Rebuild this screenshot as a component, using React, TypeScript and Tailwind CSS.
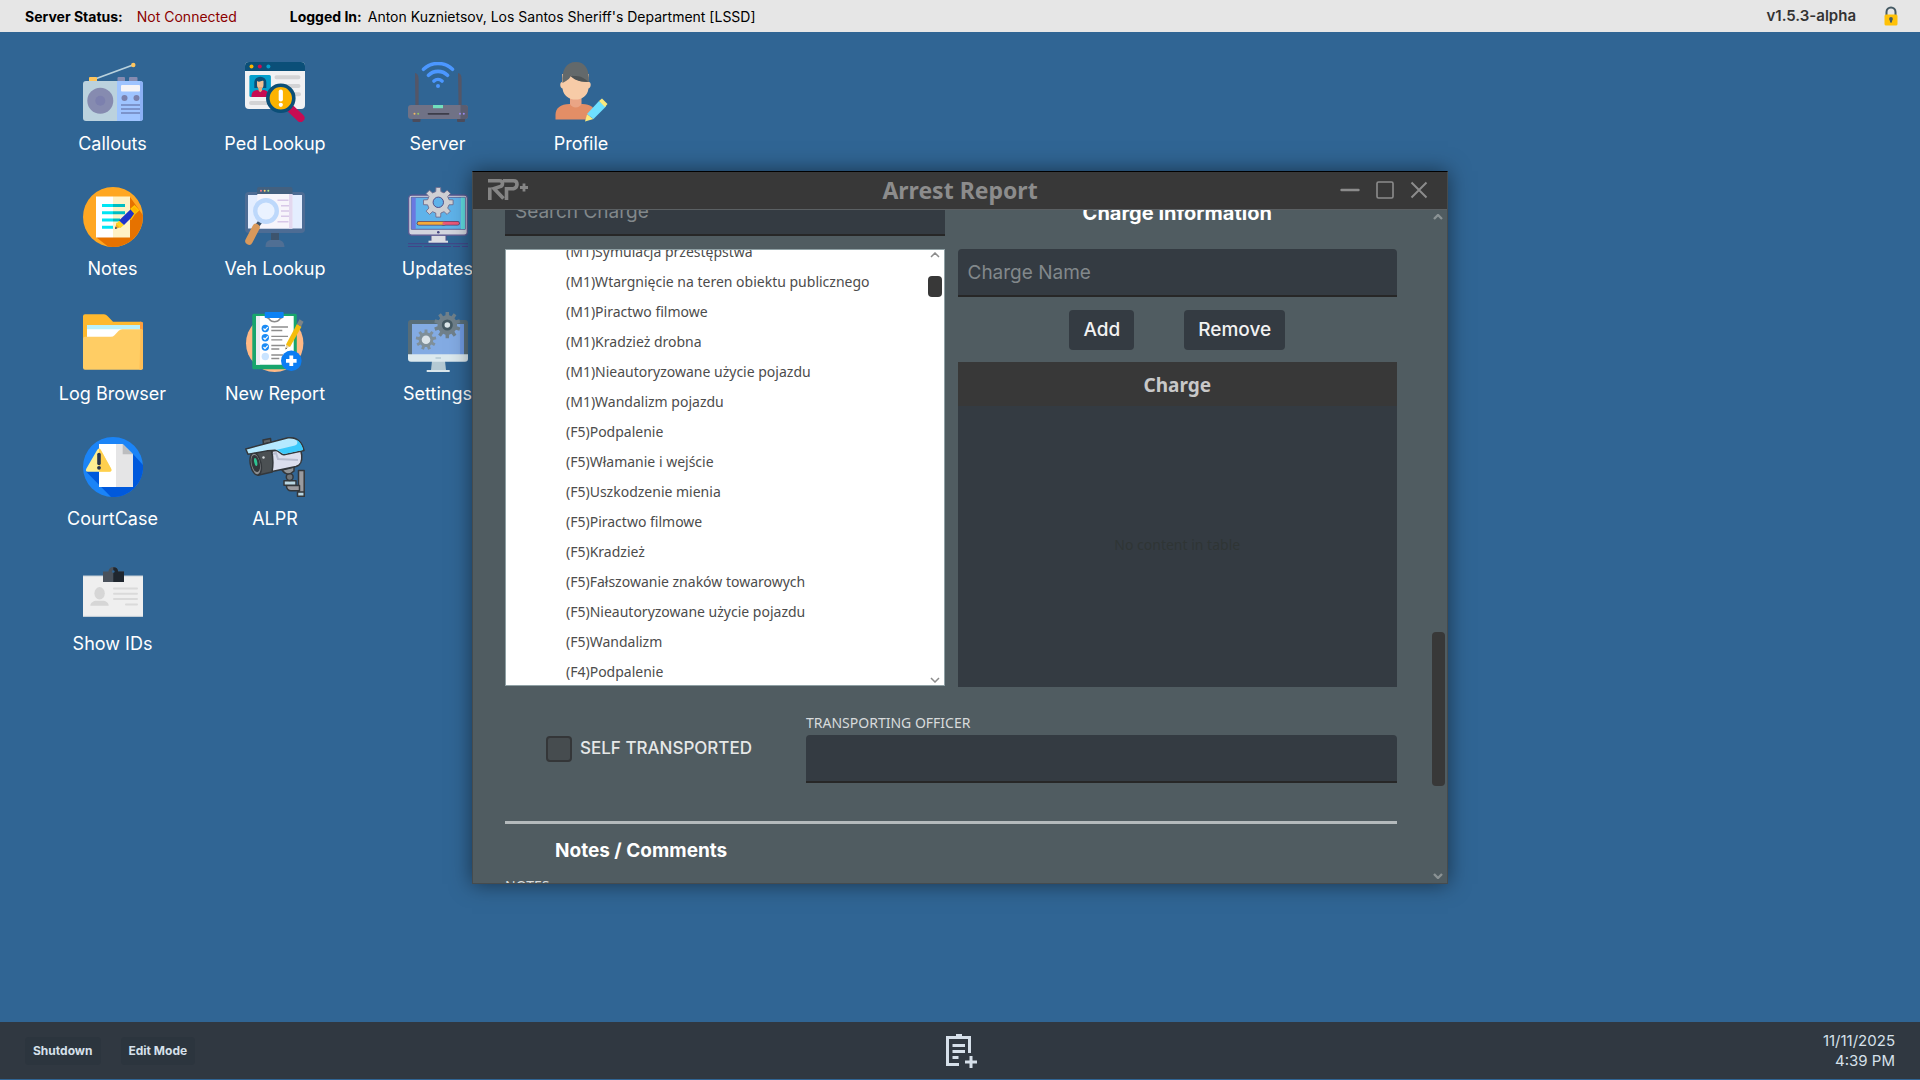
import React from "react";

function gearPath(cx: number, cy: number, outer: number, root: number, teeth: number) {
  const pts: string[] = [];
  const step = (Math.PI * 2) / teeth;
  for (let i = 0; i < teeth; i++) {
    const a = i * step - Math.PI / 2;
    const corners: [number, number][] = [
      [a - step * 0.3, root],
      [a - step * 0.2, outer],
      [a + step * 0.2, outer],
      [a + step * 0.3, root],
    ];
    for (const [angle, r] of corners) {
      pts.push(`${(cx + Math.cos(angle) * r).toFixed(2)} ${(cy + Math.sin(angle) * r).toFixed(2)}`);
    }
  }
  return `M${pts.join("L")}Z`;
}

function IconFrame({ children }: { children: React.ReactNode }) {
  return (
    <svg viewBox="0 0 60 60" className="size-[60px]" aria-hidden="true">
      {children}
    </svg>
  );
}

function RadioIcon() {
  return (
    <IconFrame>
      <path d="M12 17 50 3" stroke="#b9d2dd" strokeWidth="1.8" />
      <circle cx="50.3" cy="3" r="2.2" fill="#ffc55c" />
      <rect x="6" y="15" width="8" height="5" rx="1" fill="#ffc55c" />
      <rect x="34.5" y="15" width="7.5" height="5" rx="1" fill="#868bb0" />
      <rect x="46" y="15" width="8.5" height="5" rx="1" fill="#868bb0" />
      <path d="M3 19h31v40H3a3 3 0 0 1-3-3V22a3 3 0 0 1 3-3Z" fill="#bbd2de" />
      <path d="M34 19h23a3 3 0 0 1 3 3v34a3 3 0 0 1-3 3H34Z" fill="#9fc4ff" />
      <path d="M57 19a3 3 0 0 1 3 3v34a3 3 0 0 1-3 3Z" fill="#8bb0f5" />
      <circle cx="17.3" cy="38.8" r="13" fill="#868bb0" />
      <circle cx="17.3" cy="38.8" r="5" fill="#7c80ae" />
      <rect x="38" y="23" width="19" height="6.4" rx="1" fill="#f6f4f6" />
      <circle cx="41.5" cy="36" r="3" fill="#7a80ac" />
      <circle cx="53.5" cy="36" r="3" fill="#7a80ac" />
      <path d="M38 43h19M38 47h19M38 51h19" stroke="#7c94cb" strokeWidth="1.8" />
    </IconFrame>
  );
}

function PedIcon() {
  return (
    <IconFrame>
      <rect width="60" height="47" rx="4" fill="#f1f1f3" />
      <path d="M4 0h52a4 4 0 0 1 4 4v5H0V4a4 4 0 0 1 4-4Z" fill="#0b4f78" />
      <circle cx="6.5" cy="4.6" r="2" fill="#fcb300" />
      <circle cx="14.8" cy="4.6" r="2" fill="#c80b52" />
      <circle cx="23.4" cy="4.6" r="2" fill="#049fcc" />
      <rect x="4.4" y="13" width="21.5" height="22" rx="1.5" fill="#049fcc" />
      <path d="M9.300 26V20a5.800 5 0 0 1 12 0v6Z" fill="#0b4f78" />
      <path d="M12 19c3 2 4-1 6.500 0v4a3.200 3.600 0 0 1-6.500 0Z" fill="#f2bf92" />
      <rect x="13.500" y="25" width="3.500" height="5" fill="#e5ad7d" />
      <path d="M6.500 35c0-5 2-7 6.500-7l2.300 2.500L17.600 28c4.400 0 6.500 2 6.500 7Z" fill="#c80b52" />
      <path d="M31.500 15.300h22M31.500 23.900h22M46 32.300h8M6 40.900h18" stroke="#d3d3d5" strokeWidth="4" strokeLinecap="round" />
      <path d="m46 47 9.500 9" stroke="#c80b52" strokeWidth="8" strokeLinecap="round" />
      <circle cx="35.800" cy="36.300" r="13" fill="#fcb300" stroke="#0b4f78" strokeWidth="3.600" />
      <path d="M35.800 29.500v8" stroke="#fff" strokeWidth="4.200" strokeLinecap="round" />
      <circle cx="35.800" cy="42.800" r="2.100" fill="#fff" />
    </IconFrame>
  );
}

function RouterIcon() {
  return (
    <IconFrame>
      <path d="M7 11c2 0 3.600 2 3.600 6v27H7.400ZM50 11c2 0 3.600 2 3.600 6v27h-3Z" fill="#545667" />
      <rect x="4.500" y="56" width="8" height="4" rx="1" fill="#4b4c5c" />
      <rect x="49" y="56" width="8" height="4" rx="1" fill="#4b4c5c" />
      <rect x="0" y="43" width="60" height="14" rx="3" fill="#707286" />
      <path d="M52.500 43H57a3 3 0 0 1 3 3v8a3 3 0 0 1-3 3h-4.500Z" fill="#5b5d70" />
      <rect x="25" y="43" width="10" height="3.200" fill="#71e0bd" />
      <path d="M20.500 51.800h20" stroke="#3c3d49" strokeWidth="1.800" strokeLinecap="round" />
      <circle cx="6.500" cy="51.800" r="1" fill="#f5b862" />
      <circle cx="10.200" cy="51.800" r="1" fill="#92c663" />
      <circle cx="52" cy="51.800" r="1" fill="#9a8bee" />
      <circle cx="55.800" cy="51.800" r="1" fill="#9a8bee" />
      <path d="M15.500 7.300a21 21 0 0 1 29 0M20.500 13.300a13.500 13.500 0 0 1 19 0M26 19a6 6 0 0 1 8 0" fill="none" stroke="#4b97ff" strokeWidth="3.600" strokeLinecap="round" />
      <circle cx="30" cy="24" r="2" fill="#4b97ff" />
    </IconFrame>
  );
}

function ProfileIcon() {
  return (
    <IconFrame>
      <path d="M4.500 57.500V53c0-7 5-11 14-11h13c8 0 12 4 12.500 8l-8 7.500Z" fill="#e38e66" />
      <path d="M19 34h11.500v8c-2 4.500-9.500 4.500-11.500 0Z" fill="#eaa585" />
      <path d="M11 12h27v8c2.500 0 2.300 6-.5 6.500C36.500 34 31 37.600 24.600 37.600S12.500 34 11.500 26.500C8.700 26 8.500 20 11 20Z" fill="#f7cba7" />
      <path d="M11.500 21c-1-13 3.500-21 13.500-21 9 0 13.500 7 13 20-8 0-14-2-18-6.500C19 17 15 19 11.500 21Z" fill="#63696b" />
      <path d="M19 13.500c4 1 12-1 18 6.300C29 20 23 18 19 13.500Z" fill="#4d5355" />
      <path d="m34 59.500 2-7 6.500 4.500Z" fill="#fbe97d" />
      <path d="m36 52 12-13 7 5.500L42.500 57Z" fill="#6ee0ff" />
      <path d="m48 39 3-2.500 5.500 5.500-2.500 3Z" fill="#fbe97d" />
    </IconFrame>
  );
}

function NotesIcon() {
  return (
    <IconFrame>
      <circle cx="30" cy="30" r="30" fill="#ffa722" />
      <path d="m47 10 12.800 18A30 30 0 0 1 25 59.500L13.500 50.500Z" fill="#e67200" />
      <path d="M13 9.500h17v41H13Z" fill="#fff" />
      <path d="M30 9.500h17v41H30Z" fill="#fff2c6" />
      <path d="M19 18.500h11M19 25.700h11M19 33h11M19 40.300h11" stroke="#00e5f4" strokeWidth="3" />
      <path d="M30 18.500h12M30 25.700h12M30 33h7" stroke="#00bdc2" strokeWidth="3" />
      <path d="m32 42 1.600-6.500 4.500 4.500Z" fill="#f5ad1f" />
      <path d="m33 37 3.500-3.600 4.500 4.500-3.700 3.100Z" fill="#ffd21f" />
      <path d="m36 33.500 13-12.500 4.600 4.500L41 38Z" fill="#1f33c9" />
      <path d="m48 22 3.500-3 4 4.200-3.500 3.300ZM52.500 25.500 47.500 33" fill="#ffb300" stroke="#ffc400" strokeWidth="1.300" />
      <path d="m32 42 .6-2.400 1.700 1.700Z" fill="#26306b" />
    </IconFrame>
  );
}

function VehIcon() {
  return (
    <IconFrame>
      <path d="M26 44h8v9h-8Z" fill="#3d546e" />
      <path d="M20.500 60c0-5 2-7 6-7h6.500c4 0 6 2 6.500 7Z" fill="#506f94" />
      <rect x="0" y="5" width="60" height="41" rx="4" fill="#4d6c94" />
      <path d="M3 8h54v33.500H3Z" fill="#e4eeff" />
      <path d="M12.300 7h35v34.500h-35Z" fill="#f7f5fb" />
      <path d="M44 7h3.500v34.500H44Z" fill="#e3d8ef" />
      <path d="M14 0h31.500a2 2 0 0 1 2 2v5H12V2a2 2 0 0 1 2-2Z" fill="#43607f" />
      <circle cx="16" cy="3.700" r="1" fill="#f0798b" />
      <circle cx="19.700" cy="3.700" r="1" fill="#ffcc6b" />
      <circle cx="23.300" cy="3.700" r="1" fill="#a6e08b" />
      <path d="M32.500 13.300h11M36 18.700h8M36 24h8M36 29.300h8M32.500 34.700h11" stroke="#d8c8e8" strokeWidth="1.600" />
      <path d="m12 39 3-4" stroke="#3d546e" strokeWidth="4.500" />
      <path d="m11 40.500-7 13.500" stroke="#d9995b" strokeWidth="7.500" strokeLinecap="round" />
      <circle cx="21" cy="24" r="10.800" fill="#eaf2ff" stroke="#bdd8fb" strokeWidth="4.400" />
    </IconFrame>
  );
}

function UpdatesIcon() {
  return (
    <IconFrame>
      <path d="M23 48h15v7H23Z" fill="#dcdde3" stroke="#51508a" strokeWidth="1" />
      <path d="M20.500 54.700h19.500" stroke="#dcdde3" strokeWidth="2" />
      <rect x=".7" y="8.200" width="58.600" height="40" rx="3" fill="#d3d5de" stroke="#5c5790" strokeWidth="1.200" />
      <path d="M3.300 10.300h54v32h-54Z" fill="#5fb3ea" stroke="#51508a" strokeWidth=".8" />
      <path d="M3.700 10.700h4V42h-4Z" fill="#6b78e0" />
      <path d="M53 10.700h4V42h-4Z" fill="#5fd9dd" />
      <circle cx="30.300" cy="45.300" r="1.300" fill="#454380" />
      <path d={gearPath(30.3, 15.3, 15, 11, 8)} fill="#cfd0d4" stroke="#6f6d8e" strokeWidth=".9" strokeLinejoin="round" />
      <circle cx="30.300" cy="15.300" r="5.200" fill="#5fb3ea" stroke="#51508a" strokeWidth="1" />
      <path d="M11 36.300h25" stroke="#52436d" strokeWidth="4.600" strokeLinecap="round" />
      <path d="M35 36.300h14.500" stroke="#52436d" strokeWidth="4.600" strokeLinecap="round" />
      <path d="M11 36.300h25" stroke="#f4ab38" strokeWidth="3" strokeLinecap="round" />
      <path d="M36 36.300h13.500" stroke="#ec5878" strokeWidth="3" strokeLinecap="round" />
      <path d="M0 56.700h60M0 59.500h14M16 59.500h27M45 59.500h7M54 59.500h6" stroke="#444388" strokeWidth="1" />
    </IconFrame>
  );
}

function FolderIcon() {
  return (
    <IconFrame>
      <path d="M2 2.300h19q2 0 3.500 1.600L30 9.700h28a2 2 0 0 1 2 2V40H0V4.300a2 2 0 0 1 2-2Z" fill="#ffb92e" />
      <path d="M57 9.700h1a2 2 0 0 1 2 2V20h-3Z" fill="#ff9e3d" />
      <path d="M4 13h53v20H4Z" fill="#fff" />
      <path d="M4 13h53v4.300H4Z" fill="#bbf1fb" />
      <path d="M2 24.700h26q2 0 3.500-1.500l4.200-4.400q1.500-1.500 3.500-1.500H58a2 2 0 0 1 2 2V55.700a2 2 0 0 1-2 2H2a2 2 0 0 1-2-2v-29a2 2 0 0 1 2-2Z" fill="#ffcd64" />
      <path d="M57.500 17.300h.5a2 2 0 0 1 2 2V55.700a2 2 0 0 1-2 2h-1.500Z" fill="#ffbe55" />
    </IconFrame>
  );
}

function ReportIcon() {
  return (
    <IconFrame>
      <circle cx="29.700" cy="31.200" r="28.700" fill="#ffb985" />
      <rect x="7.300" y="1.700" width="44.500" height="55.500" rx="1.500" fill="#18a56d" />
      <path d="M11 4h37.700v48.700H11Z" fill="#fff" />
      <path d="M11 4h4v48.700h-4Z" fill="#ebedf2" />
      <path d="M21.500 5.500c1.500 0 3 1.500 4 3s7 1.500 8 0 2.500-3 4-3" fill="none" stroke="#8b8b8b" strokeWidth="1.500" />
      <rect x="19.700" y="0" width="19" height="6" rx="1" fill="#0b82f5" />
      {[16.5, 25.8, 35].map((y) => (
        <g key={y}>
          <circle cx="20.300" cy={y} r="3.700" fill="#1b8cf5" />
          <path d={`m18.500 ${y} 1.500 1.600 2.800-3`} fill="none" stroke="#fff" strokeWidth="1.300" />
        </g>
      ))}
      <circle cx="20.300" cy="44.500" r="3.700" fill="#c9e4ff" />
      <path d="M26.300 15H43M26.300 18.500h11M26.300 24.300H43M26.300 27.800h11M26.300 33.500H40M26.300 37h8M26.300 43H38M26.300 46.500h8" stroke="#8d8d8d" strokeWidth="1.300" />
      <path d="m40.500 37.500.7-5.500 3.700 2.200Z" fill="#e9d4a4" />
      <path d="m41 32.500 11-20.500 4.500 2.700L45 35Z" fill="#f5bd0d" />
      <path d="m52 12 2.500-4.700 4 2.500-2.400 4.700Z" fill="#7d8487" />
      <path d="m40.500 37.500.2-1.900 1.300.8Z" fill="#333" />
      <circle cx="46.300" cy="48.800" r="10.300" fill="#0b7df3" />
      <path d="M46.300 43.500v10.600M41 48.800h10.600" stroke="#fff" strokeWidth="3.800" />
    </IconFrame>
  );
}

function SettingsIcon() {
  return (
    <IconFrame>
      <path d="M24 49h13l1 9H23Z" fill="#b4c9d3" />
      <path d="M18.700 58h23v2h-23Z" fill="#dae6eb" />
      <rect x="0" y="8" width="60" height="41" rx="3" fill="#576d79" />
      <path d="M4 12h52v31H4Z" fill="#83abe3" />
      <path d="M52 12h4v31h-4Z" fill="#6f9ae0" />
      <path d="M0 42.300h60v4.500a3 3 0 0 1-3 3H3a3 3 0 0 1-3-3Z" fill="#dce9ee" />
      <path d="M27.500 46h5.500" stroke="#b4c9d3" strokeWidth="1.500" />
      <path d={gearPath(39.3, 13, 13.3, 9.8, 10)} fill="#70808a" />
      <circle cx="39.300" cy="13" r="5.500" fill="#455a64" />
      <circle cx="39.300" cy="13" r="2.800" fill="#dbe6ea" />
      <path d={gearPath(18, 27.7, 10.3, 7.3, 9)} fill="#7f8f99" />
      <circle cx="18" cy="27.700" r="4.300" fill="#dbe3e8" />
    </IconFrame>
  );
}

function CourtIcon() {
  return (
    <IconFrame>
      <circle cx="30" cy="30" r="30" fill="#1b84f7" />
      <path d="m50 17 10 11A30 30 0 0 1 28 60L3.500 35 15 30Z" fill="#0059dc" />
      <path d="M16 7h17v43H16Z" fill="#fff" />
      <path d="M33 7h6.700L50 17.300V50H33Z" fill="#e5e5e6" />
      <path d="M39.700 7 50 17.300H39.700Z" fill="#bcbdbf" />
      <path d="M16 11.500q1.200 0 2 1.700l10.200 18.500q1 3-1.700 3H5q-3 0-1.700-3L14 13.200q.8-1.700 2-1.700Z" fill="#ffee92" />
      <path d="M16 11.500q1.200 0 2 1.700l10.200 18.500q1 3-1.700 3H16Z" fill="#ffcf4d" />
      <path d="M16 17.500v9" stroke="#28344d" strokeWidth="3.600" strokeLinecap="round" />
      <circle cx="16" cy="30.800" r="1.900" fill="#28344d" />
    </IconFrame>
  );
}

function CameraIcon() {
  return (
    <IconFrame>
      <g stroke="#33373b" strokeWidth="1.500" strokeLinejoin="round">
        <path d="m18.500 7-.5-4 7.500-1.500.5 4Z" fill="#5d6265" />
        <path d="M53.500 33.500h5.700v25.700h-5.700Z" fill="#9b9b9f" />
        <path d="M52.500 55h6.700v4.300h-6.700Z" fill="#b9d6e2" />
        <path d="M41.500 48.500h13v5.300H46a4.500 4.500 0 0 1-4.500-4.500Z" fill="#9b9b9f" />
        <path d="M39 43.700h12v4.500H39Z" fill="#b9d6e2" />
        <circle cx="44.700" cy="40" r="3.400" fill="#6f7478" />
        <path d="m37 33 12-3v4q-3 3-6 3t-6-4Z" fill="#8f9397" />
        <path d="m27 14 28-4 1.700 8c.6 7-1 10-5.700 11.500L27 34.500Z" fill="#dcdfee" />
        <path d="M9 16.500 26 12c2 7 2.500 15 1 23l-14 3.300Z" fill="#4b5053" />
        <ellipse cx="10.700" cy="27" rx="5.300" ry="11.300" transform="rotate(-12 10.700 27)" fill="#8a8d90" />
        <ellipse cx="10.700" cy="26.500" rx="3.300" ry="8" transform="rotate(-12 10.700 26.500)" fill="#31363a" />
        <path d="M.8 12 43 .8C52 0 57 5 59 13.500l-20 4.200c-3 .5-5-4.500-9-4.500-8 0-18 2.600-27 4Z" fill="#b5e9ff" />
      </g>
      <path d="M31 13 50 8.500c3-1 3-4 1-6 4 2 6.300 6 7.200 10.500l-19 3.900c-2.200 0-4-3.400-8.200-3.900Z" fill="#3bc9fb" />
      <ellipse cx="10.700" cy="25" rx="1.500" ry="4" transform="rotate(-12 10.700 25)" fill="#2fc391" />
      <circle cx="18.500" cy="20.500" r="1.200" fill="#d4d8da" />
      <path d="m28 17 3-1 2 6 20 1" fill="none" stroke="#b8bdd0" strokeWidth="2" />
    </IconFrame>
  );
}

function IdIcon() {
  return (
    <IconFrame>
      <path d="M0 14h60v40.500H0Z" fill="#efefef" />
      <path d="M0 14h60M0 54.400h60" stroke="#c9d2d8" strokeWidth="1" />
      <path d="M20 9.500h5.500a4.800 4.500 0 0 1 9.600 0H41V20H20Z" fill="#4a525c" />
      <path d="M30.300 5.200a4.800 4.500 0 0 1 4.800 4.300H41V20H30.300Z" fill="#1f262e" />
      <circle cx="30.300" cy="9.500" r="1.300" fill="#306594" />
      <ellipse cx="16.600" cy="31.300" rx="5.200" ry="6.200" fill="#d6d6d6" />
      <path d="M7.300 43.700c0-3 3-5 6.700-5h5.300c3.700 0 6.400 2 6.400 5Z" fill="#d6d6d6" />
      <path d="M31 26.400h23M31 31.700h23M31 37h23M43 42.400h11" stroke="#dadada" strokeWidth="2" strokeLinecap="round" />
    </IconFrame>
  );
}

type Shortcut = { label: string; Icon: () => React.ReactElement };

const columns: { width: string; items: Shortcut[] }[] = [
  {
    width: "w-[163px]",
    items: [
      { label: "Callouts", Icon: RadioIcon },
      { label: "Notes", Icon: NotesIcon },
      { label: "Log Browser", Icon: FolderIcon },
      { label: "CourtCase", Icon: CourtIcon },
      { label: "Show IDs", Icon: IdIcon },
    ],
  },
  {
    width: "w-[162px]",
    items: [
      { label: "Ped Lookup", Icon: PedIcon },
      { label: "Veh Lookup", Icon: VehIcon },
      { label: "New Report", Icon: ReportIcon },
      { label: "ALPR", Icon: CameraIcon },
    ],
  },
  {
    width: "w-[163px]",
    items: [
      { label: "Server", Icon: RouterIcon },
      { label: "Updates", Icon: UpdatesIcon },
      { label: "Settings", Icon: SettingsIcon },
    ],
  },
  { width: "w-[124px]", items: [{ label: "Profile", Icon: ProfileIcon }] },
];

const charges = [
  "(M1)Symulacja przestępstwa",
  "(M1)Wtargnięcie na teren obiektu publicznego",
  "(M1)Piractwo filmowe",
  "(M1)Kradzież drobna",
  "(M1)Nieautoryzowane użycie pojazdu",
  "(M1)Wandalizm pojazdu",
  "(F5)Podpalenie",
  "(F5)Włamanie i wejście",
  "(F5)Uszkodzenie mienia",
  "(F5)Piractwo filmowe",
  "(F5)Kradzież",
  "(F5)Fałszowanie znaków towarowych",
  "(F5)Nieautoryzowane użycie pojazdu",
  "(F5)Wandalizm",
  "(F4)Podpalenie",
];

const fieldClass =
  "block h-12 w-full rounded-t border-b-2 border-[#272727] bg-[#343b42] px-2.5 text-[19px] text-white placeholder:text-[#82888b] outline-none";

function Chevron({ up, bold }: { up?: boolean; bold?: boolean }) {
  return (
    <svg viewBox="0 0 10 6" className="h-[6px] w-[10px]" aria-hidden="true">
      <path
        d={up ? "M1 5 5 1l4 4" : "m1 1 4 4 4-4"}
        fill="none"
        stroke={bold ? "#8a9294" : "#8c8c8c"}
        strokeWidth={bold ? 2.4 : 1.5}
      />
    </svg>
  );
}

function TopBar() {
  return (
    <header className="flex h-8 shrink-0 items-center bg-[#e6e6e6] pl-[25px] pr-[22px] text-[14px] text-black">
      <p className="flex gap-3.5">
        <span className="font-bold">Server Status:</span>
        <span className="text-[#8b0000]">Not Connected</span>
      </p>
      <p className="ml-[53px] flex gap-1.5">
        <span className="font-bold">Logged In:</span>
        <span>Anton Kuznietsov, Los Santos Sheriff's Department [LSSD]</span>
      </p>
      <span className="ml-auto text-[15px] font-semibold text-[#333]">v1.5.3-alpha</span>
      <svg viewBox="0 0 14 20" className="ml-7 h-5 w-3.5" role="img" aria-label="Locked">
        <path d="M2.500 9V6a4.500 4.500 0 0 1 9 0v3" fill="none" stroke="#455a64" strokeWidth="2" />
        <rect x=".5" y="8.500" width="13" height="11" rx="1.500" fill="#ffc107" />
        <circle cx="7" cy="13" r="1.900" fill="#455a64" />
        <path d="M6 13.500h2v3H6Z" fill="#455a64" />
      </svg>
    </header>
  );
}

function Desktop() {
  return (
    <nav aria-label="Desktop shortcuts" className="flex pl-[31px] pt-[30px]">
      {columns.map((column, i) => (
        <div key={i} className={`flex flex-col ${column.width}`}>
          {column.items.map(({ label, Icon }) => (
            <button key={label} type="button" className="flex h-[125px] flex-col items-center">
              <Icon />
              <span className="mt-2 text-[18px] leading-7 text-white">{label}</span>
            </button>
          ))}
        </div>
      ))}
    </nav>
  );
}

function TitleBar() {
  return (
    <div className="grid h-[38px] shrink-0 grid-cols-[1fr_auto_1fr] items-center border-b border-[#5b6063] bg-[#383838] px-[15px] pb-0.5 text-[#8c8c8c]">
      <svg viewBox="0 0 40 21" className="h-[21px] w-10" role="img" aria-label="RP+">
        <g fill="none" stroke="#858585" strokeWidth="3.6">
          <path d="M0 1.800h11.500q3 0 3 2.800t-3 3.200L6 9.500l9.500 10" />
          <path d="M1.800 8.500V21M15 1.800h10.500q3.500 0 3.500 3.500t-3.500 4.500h-7V21" />
          <path d="M32 8.500h8M36 4.500v8" strokeWidth="2.800" />
        </g>
      </svg>
      <h1 className="font-['Noto_Sans',sans-serif] text-[23px] font-bold leading-8">Arrest Report</h1>
      <div className="mr-1 flex items-center gap-4 justify-self-end">
        <button type="button" aria-label="Minimize">
          <svg viewBox="0 0 20 18" className="h-[18px] w-5" aria-hidden="true">
            <path d="M1.500 9h17" stroke="currentColor" strokeWidth="2.400" strokeLinecap="round" />
          </svg>
        </button>
        <button type="button" aria-label="Maximize">
          <svg viewBox="0 0 18 18" className="size-[18px]" aria-hidden="true">
            <rect x="1" y="1" width="16" height="16" rx="1.500" fill="none" stroke="currentColor" strokeWidth="1.600" />
          </svg>
        </button>
        <button type="button" aria-label="Close">
          <svg viewBox="0 0 18 18" className="size-[18px]" aria-hidden="true">
            <path d="m1.500 1.500 15 15m0-15-15 15" stroke="currentColor" strokeWidth="2" />
          </svg>
        </button>
      </div>
    </div>
  );
}

function ChargeList() {
  return (
    <div className="mt-[13px] flex h-[437px] overflow-hidden border border-[#8fa0a4] bg-white">
      <ul className="-mt-[13px] flex-1 pl-[60px] font-['Noto_Sans',sans-serif] text-[14px] leading-[30px] text-[#4c4c4c]">
        {charges.map((charge, i) => (
          <li key={i}>{charge}</li>
        ))}
      </ul>
      <div className="flex w-[18px] flex-col items-center py-0.5">
        <Chevron up />
        <div className="mt-[18px] h-[21px] w-3.5 rounded bg-[#383838]" />
        <div className="mt-auto">
          <Chevron />
        </div>
      </div>
    </div>
  );
}

function ChargeInformation() {
  return (
    <div className="flex flex-col pt-[11px]">
      <h2 className="text-center text-[20px] font-bold leading-7 text-white">Charge Information</h2>
      <input aria-label="Charge Name" placeholder="Charge Name" className={`${fieldClass} mt-[22px]`} />
      <div className="mb-3 mt-[13px] flex justify-center gap-[50px] text-[19px] font-medium text-[#f2f2f2]">
        <button type="button" className="h-10 rounded bg-[#343b42] px-3.5">Add</button>
        <button type="button" className="h-10 rounded bg-[#343b42] px-3.5">Remove</button>
      </div>
      <table className="w-full flex-1 bg-[#343b42] font-['Noto_Sans',sans-serif]">
        <thead>
          <tr>
            <th scope="col" className="h-11 bg-[#383838] pt-0.5 text-[19px] font-bold text-[#c8c8c8]">Charge</th>
          </tr>
        </thead>
        <tbody>
          <tr>
            <td className="h-[281px] pb-1 text-center text-[14px] text-[#2f3535]">No content in table</td>
          </tr>
        </tbody>
      </table>
    </div>
  );
}

function ReportWindow() {
  return (
    <section
      aria-label="Arrest Report"
      className="absolute left-[472px] top-[139px] flex h-[713px] w-[976px] flex-col border border-[#454b4e] border-t-black bg-[#505c61] shadow-[0_0_20px_rgba(0,0,0,0.5)]"
    >
      <TitleBar />
      <div className="flex min-h-0 flex-1">
        <div className="flex-1 overflow-hidden px-8">
          <div className="-mt-[22px]">
            <div className="grid grid-cols-2 gap-[13px]">
              <div>
                <input aria-label="Search Charge" placeholder="Search Charge" className={fieldClass} />
                <ChargeList />
              </div>
              <ChargeInformation />
            </div>
            <div className="mt-6 flex">
              <label className="flex w-[301px] items-center gap-2 self-end pb-[21px] pl-[41px] text-[17px] font-medium text-[#e6e8e8]">
                <input type="checkbox" className="size-[26px] appearance-none rounded border-2 border-[#343638] bg-[#464c4f]" />
                SELF TRANSPORTED
              </label>
              <div className="flex-1">
                <label htmlFor="officer" className="block font-['Noto_Sans',sans-serif] text-[14px] leading-6 text-[#d8dbdc]">
                  TRANSPORTING OFFICER
                </label>
                <input id="officer" className={fieldClass} />
              </div>
            </div>
            <hr className="mt-[38px] border-t-[3px] border-[#b4babc]" />
            <h2 className="mt-[13px] pl-[50px] text-[19px] font-bold leading-7 text-white">Notes / Comments</h2>
            <p className="mt-[11px] font-['Noto_Sans',sans-serif] text-[14px] leading-5 text-[#d8dbdc]">NOTES</p>
          </div>
        </div>
        <div className="flex w-[18px] shrink-0 flex-col items-center py-1">
          <Chevron up bold />
          <div className="mt-[412px] h-[154px] w-[13px] rounded bg-[#383838]" />
          <div className="mt-auto">
            <Chevron bold />
          </div>
        </div>
      </div>
    </section>
  );
}

function Taskbar() {
  return (
    <footer className="grid h-[57px] shrink-0 grid-cols-[1fr_auto_1fr] items-center bg-[#303841] px-[25px] pt-px text-[#d6e0ea]">
      <div className="flex gap-5 text-[12px] font-bold">
        <button type="button" className="h-7 rounded bg-[#2c353e] px-2">Shutdown</button>
        <button type="button" className="h-7 rounded bg-[#2c353e] px-2">Edit Mode</button>
      </div>
      <button type="button" aria-label="New report" className="pl-1">
        <svg viewBox="0 0 32 34" className="h-[34px] w-8" aria-hidden="true">
          <g fill="none" stroke="#d6e0ea" strokeWidth="3">
            <path d="M13 30.500H1.500V3.500h22V19" />
            <path d="M10 1.500h6" />
            <path d="M6.500 11.500H19M6.500 17.500H19M6.500 23.500h6" strokeWidth="2.800" />
            <path d="M25 22v12M19 28h12" />
          </g>
        </svg>
      </button>
      <div className="justify-self-end text-right text-[15px] leading-5">
        <div>11/11/2025</div>
        <div>4:39 PM</div>
      </div>
    </footer>
  );
}

export default function App() {
  return (
    <div className="flex h-screen flex-col overflow-hidden bg-[#306594] pb-px font-[Inter,sans-serif]">
      <TopBar />
      <main className="relative min-h-0 flex-1">
        <Desktop />
        <ReportWindow />
      </main>
      <Taskbar />
    </div>
  );
}
